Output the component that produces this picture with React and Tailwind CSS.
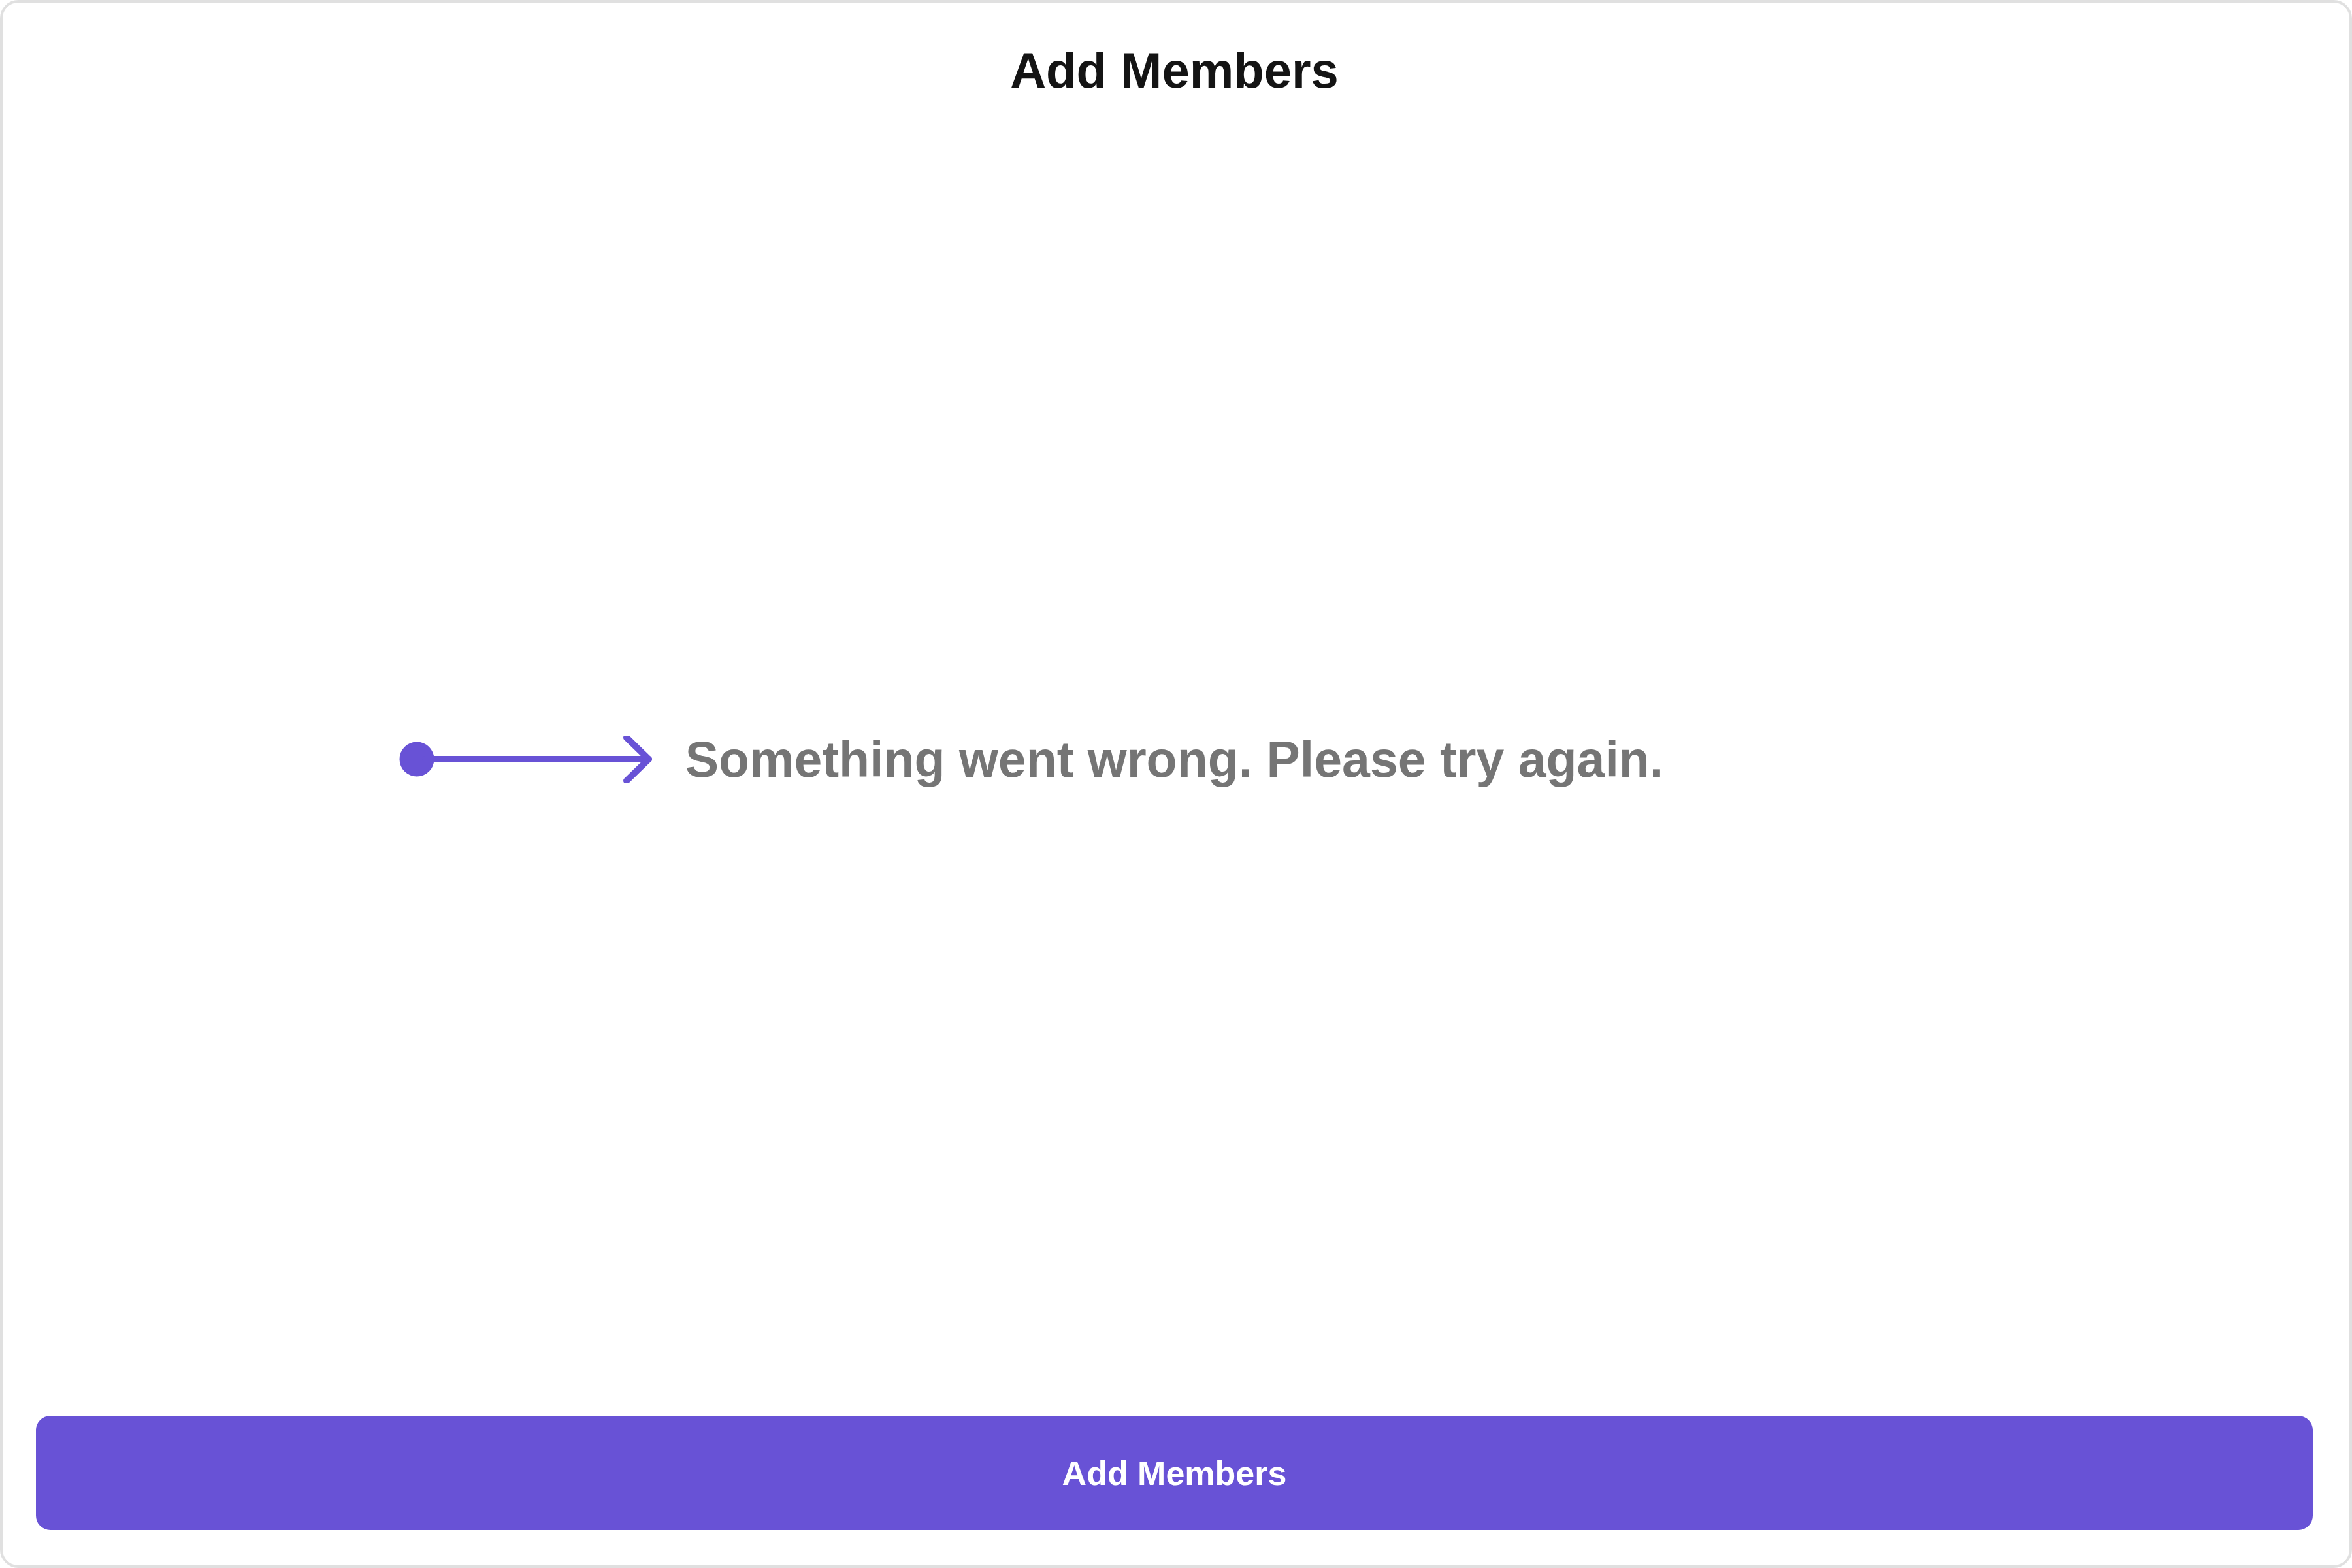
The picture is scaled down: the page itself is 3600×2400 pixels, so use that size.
import React from 'react';

const ArrowIcon = () => (
  <svg width="388" height="72" viewBox="0 0 388 72" fill="none">
    <circle cx="27" cy="36" r="26.5" fill="#6852D6" />
    <path d="M40 36 H382" stroke="#6852D6" strokeWidth="10" strokeLinecap="round" />
    <path d="M348 3 L382 36 L348 69" stroke="#6852D6" strokeWidth="10" strokeLinecap="round" strokeLinejoin="round" />
  </svg>
);

const App = () => {
  return (
    <div className="w-full h-screen bg-white font-['Liberation_Sans',Arial,sans-serif]">
      <div className="h-full flex flex-col border-4 border-[#e0e0e0] rounded-[28px] pl-[51px] pr-[56px] pt-[56px] pb-[54px]">
        <h1 className="text-center text-[76px] leading-[96px] font-bold text-[#141414]">Add Members</h1>

        <div className="flex-1 grid grid-cols-[1fr_auto_1fr] items-center">
          <div className="flex justify-end pr-[50px]">
            <ArrowIcon />
          </div>
          <p className="text-[77px] leading-[96px] font-bold text-[#757575]">
            Something went wrong. Please try again.
          </p>
          <div />
        </div>

        <button className="w-full h-[175px] rounded-[22px] bg-[#6852D6] text-white text-[52px] font-bold">
          Add Members
        </button>
      </div>
    </div>
  );
};

export default App;
